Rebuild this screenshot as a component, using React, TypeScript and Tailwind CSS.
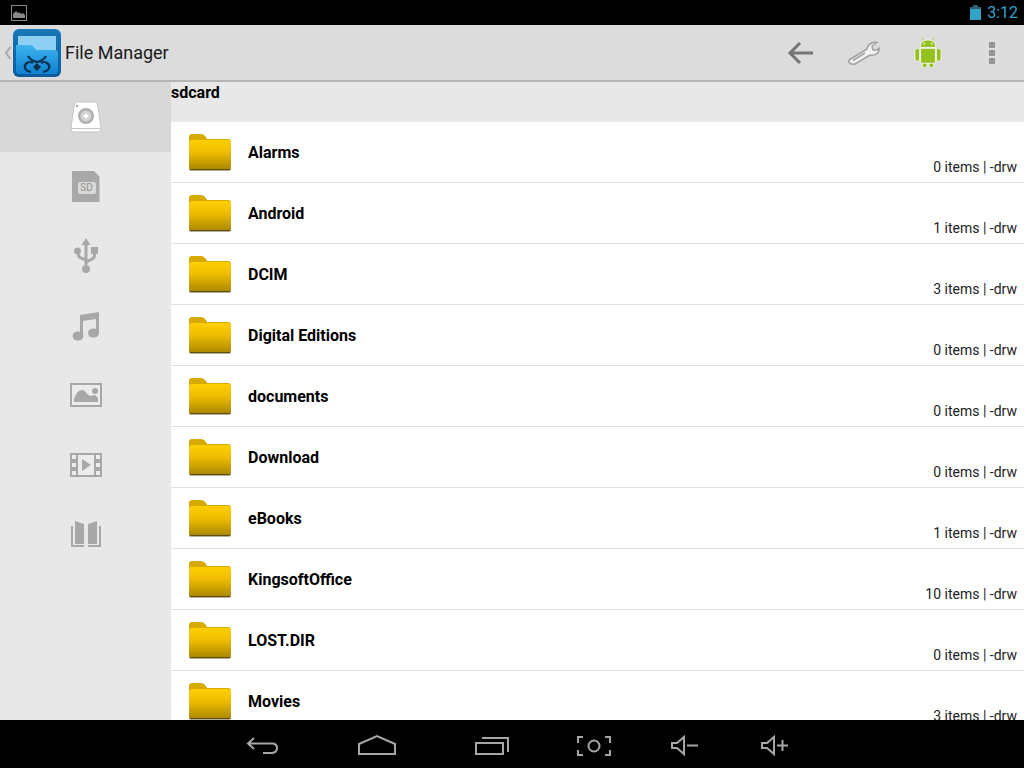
import type { ReactNode } from 'react'

const files = [
  { name: 'Alarms', count: 0 },
  { name: 'Android', count: 1 },
  { name: 'DCIM', count: 3 },
  { name: 'Digital Editions', count: 0 },
  { name: 'documents', count: 0 },
  { name: 'Download', count: 0 },
  { name: 'eBooks', count: 1 },
  { name: 'KingsoftOffice', count: 10 },
  { name: 'LOST.DIR', count: 0 },
  { name: 'Movies', count: 3 },
]

function FolderIcon({ id }: { id: number }) {
  return (
    <svg width="44" height="40" viewBox="0 0 44 40" className="shrink-0">
      <defs>
        <linearGradient id={`folder-${id}`} x1="0" y1="0" x2="0" y2="1">
          <stop offset="0" stopColor="#ffcf00" />
          <stop offset="0.4" stopColor="#efbd00" />
          <stop offset="1" stopColor="#a88700" />
        </linearGradient>
      </defs>
      <path d="M1 14q0-2 2-2h38q2 0 2 2v23q0 2-2 2H3q-2 0-2-2z" fill="#5e4d14" opacity="0.45" />
      <path d="M1 10V5q0-3 3-3h9q3 0 5 3l1 2h21q3 0 3 3z" fill="#d6aa00" />
      <path d="M1 36V11q0-3 3-3h36q3 0 3 3v25q0 2-2 2H3q-2 0-2-2z" fill={`url(#folder-${id})`} />
      <path d="M2 37.500h40" stroke="#5e4d14" strokeWidth="1.200" />
    </svg>
  )
}

function SideItem({ children, active }: { children: ReactNode; active?: boolean }) {
  return (
    <div className={`flex h-[69.6px] items-center justify-center ${active ? 'bg-[#d8d8d8]' : ''}`}>
      {children}
    </div>
  )
}

function AppLogo() {
  return (
    <svg width="48" height="48" viewBox="0 0 48 48" className="shrink-0">
      <defs>
        <linearGradient id="logo-bg" x1="0" y1="0" x2="0" y2="1">
          <stop offset="0" stopColor="#1878b8" />
          <stop offset="1" stopColor="#0a5a9c" />
        </linearGradient>
        <linearGradient id="logo-front" x1="0" y1="0" x2="0" y2="1">
          <stop offset="0" stopColor="#3db4ee" />
          <stop offset="1" stopColor="#0f7fd0" />
        </linearGradient>
      </defs>
      <rect width="48" height="48" rx="6" fill="url(#logo-bg)" />
      <rect x="5" y="7" width="38" height="22" fill="#8dd0f4" />
      <path d="M3 16h14q2 0 3.500 2l3 3H42q3 0 3 3v18q0 3-3 3H6q-3 0-3-3z" fill="url(#logo-front)" />
      <g fill="none" stroke="#07304e" strokeWidth="2.200">
        <path d="M20 34q-3-2-6 0t-2 5 6 4" />
        <path d="M28 34q3-2 6 0t2 5-6 4" />
        <path d="M15 27q3 5 9 6q6-1 9-6" />
      </g>
      <path d="M24 34l4 4-4 4-4-4z" fill="#07304e" />
    </svg>
  )
}

function NavIcon({ children, w }: { children: ReactNode; w: number }) {
  return (
    <svg width={w} height="24" viewBox={`0 0 ${w} 24`} fill="none" stroke="#a6a6a6" strokeWidth="2">
      {children}
    </svg>
  )
}

export default function App() {
  return (
    <div className="flex h-[768px] w-[1024px] flex-col overflow-hidden bg-black font-['Roboto',sans-serif]">
      {/* Status bar */}
      <div className="flex h-[25px] shrink-0 items-center justify-between pl-[11px] pr-[6px]">
        <svg width="16" height="16" viewBox="0 0 16 16">
          <rect x="0.5" y="0.5" width="15" height="15" fill="none" stroke="#8a8a8a" />
          <path d="M2 13V9l3-3 2 2 1-1 2 2 2-1 2 2v3z" fill="#8a8a8a" />
        </svg>
        <div className="flex items-center gap-[6px]">
          <svg width="11" height="15" viewBox="0 0 11 15">
            <path d="M3 0h5v2h3v13H0V2h3z" fill="#2f5f74" />
            <rect y="4" width="11" height="11" fill="#33a2c8" />
          </svg>
          <span className="text-[16px] leading-none text-[#33a2cc]">3:12</span>
        </div>
      </div>

      {/* Action bar */}
      <div className="flex h-[57px] shrink-0 items-center border-b-2 border-[#b4b4b4] bg-[#dcdcdc]">
        <svg width="8" height="14" viewBox="0 0 8 14" className="ml-[4px] mr-px">
          <path d="M6.5 1L2 7l4.5 6" fill="none" stroke="#a8a8a8" strokeWidth="2" />
        </svg>
        <AppLogo />
        <span className="ml-[4px] text-[18px] text-[#1a1a1a]">File Manager</span>
        <div className="ml-auto flex items-center">
          <div className="flex w-[64px] justify-center">
            <svg width="26" height="24" viewBox="0 0 26 24" fill="none" stroke="#757575" strokeWidth="3">
              <path d="M26 12H3M13 2L3 12l10 10" />
            </svg>
          </div>
          <div className="flex w-[64px] justify-center">
            <svg width="32" height="24" viewBox="0 0 32 24">
              <path
                d="M1 19L19 8q1-5 6-6.500q2-.5 4 0L24 5l1 4 4 0 2-2q.5 3-1.500 5q-3 3-7.500 2L7 23q-4 1-6-2z"
                fill="#f2f2f2"
                stroke="#a0a0a0"
                strokeWidth="1.500"
              />
              <path d="M5 19.500L17 12" stroke="#a0a0a0" strokeWidth="1.500" />
            </svg>
          </div>
          <div className="flex w-[64px] justify-center">
            <svg width="28" height="32" viewBox="0 0 30 34">
              <g fill="#95c11f" stroke="#f4f4f4" strokeWidth="1">
                <rect x="1" y="12" width="5" height="14" rx="2.500" />
                <rect x="24" y="12" width="5" height="14" rx="2.500" />
                <rect x="9" y="23" width="5" height="10" rx="2.500" />
                <rect x="16" y="23" width="5" height="10" rx="2.500" />
                <path d="M7 11V10q0-7 8-7t8 7v1z" />
                <path d="M7 12h16v14q0 2-2 2H9q-2 0-2-2z" />
              </g>
              <circle cx="11" cy="7" r="1" fill="#f4f4f4" />
              <circle cx="19" cy="7" r="1" fill="#f4f4f4" />
              <path d="M10 3L8 1M20 3l2-2" stroke="#95c11f" strokeWidth="1" />
            </svg>
          </div>
          <div className="flex w-[64px] flex-col items-center gap-[2px]">
            <div className="h-[6px] w-[6px] bg-[#969696]" />
            <div className="h-[6px] w-[6px] bg-[#969696]" />
            <div className="h-[6px] w-[6px] bg-[#969696]" />
          </div>
        </div>
      </div>

      {/* Main */}
      <div className="flex min-h-0 flex-1">
        <div className="w-[171px] shrink-0 bg-[#e8e8e8]">
          <SideItem active>
            <svg width="32" height="32" viewBox="0 0 32 32">
              <path d="M7 1h18q2 0 2.500 2L31 27q0 4-3 4H4q-3 0-3-4L4.500 3Q5 1 7 1z" fill="#ffffff" stroke="#bdbdbd" strokeWidth="0.800" />
              <rect x="6" y="4" width="2" height="2" fill="#a0a0a0" />
              <circle cx="16" cy="15" r="8" fill="#b0b0b0" />
              <circle cx="16" cy="15" r="5.500" fill="#d2d2d2" />
              <path d="M13.500 15h5M16 12.500v5" stroke="#ffffff" strokeWidth="2" />
              <path d="M1.500 27.500h29" stroke="#c4c4c4" strokeWidth="1" />
            </svg>
          </SideItem>
          <SideItem>
            <div className="relative h-[31px] w-[28px] rounded-[1px] bg-[#a8a8a8] [clip-path:polygon(0_0,80%_0,100%_18%,100%_100%,0_100%)]">
              <span className="absolute left-[6px] top-[11px] flex h-[12px] w-[18px] items-center justify-center rounded-[2px] bg-[#d9d9d9] text-[10px] leading-none text-[#909090]">
                SD
              </span>
            </div>
          </SideItem>
          <SideItem>
            <svg width="24" height="36" viewBox="0 0 24 36" fill="#a8a8a8">
              <path d="M12 0l4.500 7h-3v20h-3V7h-3z" />
              <circle cx="12" cy="31" r="4" />
              <circle cx="3.500" cy="13" r="3.500" />
              <rect x="17" y="9" width="7" height="7" />
              <path d="M3 14v3q0 3 3 4l6 3v-3.500l-4.500-2q-2-1-2-2.500v-2zM19 14v3q0 2-2 3l-5 2.500V26l6.500-3.500Q22 21 22 17v-3z" />
            </svg>
          </SideItem>
          <SideItem>
            <svg width="28" height="30" viewBox="0 0 28 30" fill="#a8a8a8">
              <path d="M8 4l19-3v22h-3V8L11 10v16H8z" />
              <ellipse cx="6" cy="25" rx="5.500" ry="4.500" />
              <ellipse cx="21.500" cy="22" rx="5.500" ry="4.500" />
            </svg>
          </SideItem>
          <SideItem>
            <svg width="32" height="24" viewBox="0 0 32 24">
              <rect x="1" y="1" width="30" height="22" fill="#ececec" stroke="#a8a8a8" strokeWidth="2" />
              <path d="M4 19v-3q3-9 8-9 3 0 5 4l3 2 5-1 3 3v4z" fill="#a8a8a8" />
              <circle cx="25" cy="8" r="3" fill="#a8a8a8" />
            </svg>
          </SideItem>
          <SideItem>
            <svg width="32" height="24" viewBox="0 0 32 24">
              <rect width="32" height="24" fill="#a8a8a8" />
              <rect x="8" y="2" width="16" height="20" fill="#ececec" />
              <g fill="#ececec">
                <rect x="2" y="2" width="4" height="4" />
                <rect x="2" y="10" width="4" height="4" />
                <rect x="2" y="18" width="4" height="4" />
                <rect x="26" y="2" width="4" height="4" />
                <rect x="26" y="10" width="4" height="4" />
                <rect x="26" y="18" width="4" height="4" />
              </g>
              <path d="M12 6l9 6-9 6z" fill="#a8a8a8" />
            </svg>
          </SideItem>
          <SideItem>
            <svg width="32" height="26" viewBox="0 0 32 26">
              <path d="M1 5h2v19h11v2H1zM31 5h-2v19H18v2h13z" fill="#a8a8a8" />
              <path d="M5 0l9 3v20H5zM27 0l-9 3v20h9z" fill="#a8a8a8" />
            </svg>
          </SideItem>
        </div>

        <div className="flex min-w-0 flex-1 flex-col overflow-hidden bg-white">
          <div className="h-[40px] shrink-0 bg-[#e8e8e8] text-[16px] font-bold leading-[22px] text-black">sdcard</div>
          {files.map((f, i) => (
            <div key={f.name} className="relative flex h-[61px] shrink-0 items-center border-b border-[#e2e2e2] pl-[17px]">
              <FolderIcon id={i} />
              <span className="ml-[16px] pt-[2px] text-[16px] font-bold text-black">{f.name}</span>
              <span className="absolute bottom-[6px] right-[7px] text-[14px] leading-[18px] text-[#222222]">
                {f.count} items | -drw
              </span>
            </div>
          ))}
        </div>
      </div>

      {/* Navigation bar */}
      <div className="flex h-[48px] shrink-0 items-center pt-[2px]">
        <div className="ml-[245px] flex items-center">
          <NavIcon w={34}>
            <path d="M9 5L3 10.500l6 5.500M3 10.500h24q5 0 5 4.500t-5 5h-9" />
          </NavIcon>
          <div className="ml-[79px]">
            <NavIcon w={38}>
              <path d="M1 21V11L19 3l18 8v10z" />
            </NavIcon>
          </div>
          <div className="ml-[78px]">
            <NavIcon w={36}>
              <path d="M2 10h27v11H2zM8 5h26v14" />
            </NavIcon>
          </div>
          <div className="ml-[66px]">
            <NavIcon w={36}>
              <path d="M7 4H2v6M29 4h5v6M7 22H2v-5M29 22h5v-5" />
              <circle cx="18" cy="13" r="5.500" />
            </NavIcon>
          </div>
          <div className="ml-[59px]">
            <NavIcon w={27}>
              <path d="M1 10v5h5l7 6V4l-7 6zM16 12.500h11" />
            </NavIcon>
          </div>
          <div className="ml-[63px]">
            <NavIcon w={27}>
              <path d="M1 10v5h5l7 6V4l-7 6zM16 12.500h11M21.500 7v11" />
            </NavIcon>
          </div>
        </div>
      </div>
    </div>
  )
}
